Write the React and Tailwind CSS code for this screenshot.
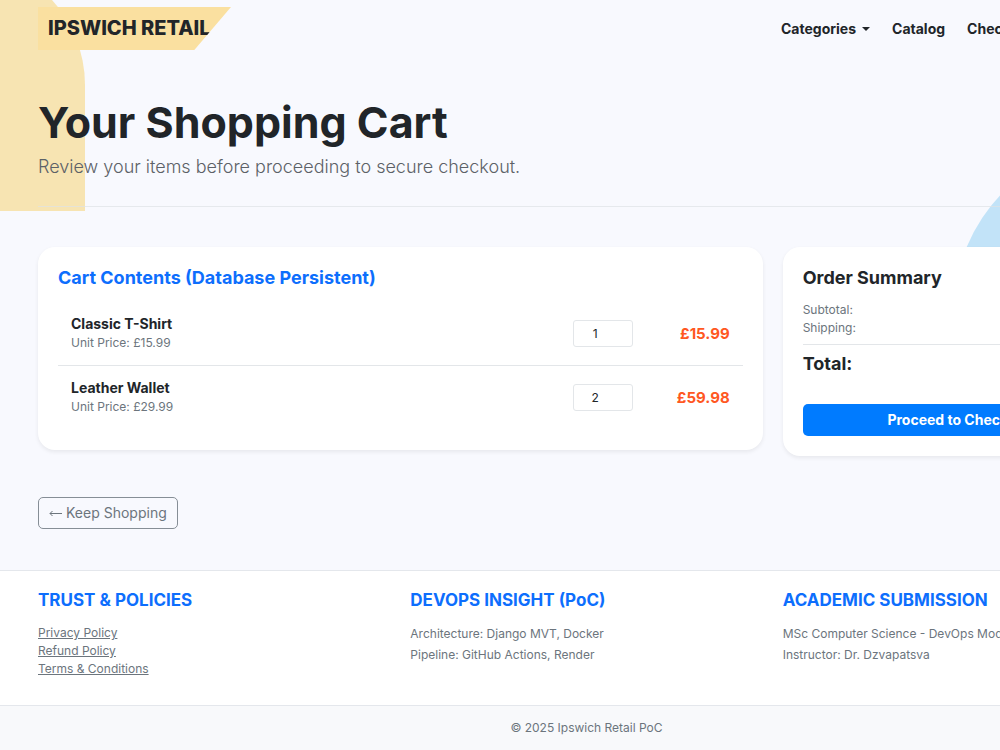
import { useState } from 'react';

const initialItems = [
  { id: 1, name: 'Classic T-Shirt', price: 15.99, qty: 1 },
  { id: 2, name: 'Leather Wallet', price: 29.99, qty: 2 },
];

const policies = ['Privacy Policy', 'Refund Policy', 'Terms & Conditions'];

const money = (value) => `£${value.toFixed(2)}`;

const Header = () => (
  <header className="relative flex items-center justify-between px-[38px] py-[7px]">
    <a
      href="#"
      className="w-[193px] h-[43px] pl-[10px] bg-[#fae0a0] text-[20px] leading-[43px] font-extrabold whitespace-nowrap [clip-path:polygon(0_0,100%_0,81%_100%,0_100%)]"
    >
      IPSWICH RETAIL
    </a>
    <nav className="flex w-[354px] gap-[22px] text-[14px] leading-[20px] font-bold whitespace-nowrap">
      <button className="flex items-center gap-[6px] font-bold">
        Categories
        <span className="border-x-4 border-t-4 border-x-transparent border-t-[#212529]" />
      </button>
      <a href="#">Catalog</a>
      <a href="#">Checkout</a>
      <a href="#">Cart</a>
    </nav>
  </header>
);

const CartContents = ({ items, onChange }) => (
  <section className="col-span-2 rounded-[17px] bg-white px-5 py-[21px] shadow-[0_2px_4px_rgba(0,0,0,0.07)]">
    <h2 className="mb-[14px] text-[18px] leading-[20px] font-bold text-[#0d6efd]">
      Cart Contents (Database Persistent)
    </h2>
    <ul className="divide-y divide-[#e3e6e9]">
      {items.map((item) => (
        <li key={item.id} className="flex items-center p-[13px]">
          <div className="flex-1">
            <h3 className="text-[14px] leading-[18px] font-bold">{item.name}</h3>
            <p className="text-[12px] leading-[19px] text-[#6c757d]">Unit Price: {money(item.price)}</p>
          </div>
          <input
            type="number"
            min="1"
            aria-label={`Quantity of ${item.name}`}
            value={item.qty}
            onChange={(e) => onChange(item.id, Number(e.target.value))}
            className="w-[60px] h-[27px] rounded-[3px] border border-[#e3e6e9] bg-white px-[7px] text-center text-[12px] leading-[18px]"
          />
          <p className="w-[97px] text-right text-[15px] leading-[20px] font-bold text-[#ff5722]">
            {money(item.price * item.qty)}
          </p>
        </li>
      ))}
    </ul>
  </section>
);

const OrderSummary = ({ total }) => (
  <section className="rounded-[17px] bg-white px-5 pt-[21px] pb-5 shadow-[0_2px_4px_rgba(0,0,0,0.07)]">
    <h2 className="mb-[13px] text-[18px] leading-[20px] font-bold">Order Summary</h2>
    <div className="text-[12px] leading-[18px] text-[#6c757d]">
      <p className="flex justify-between">
        <span>Subtotal:</span>
        <span>{money(total)}</span>
      </p>
      <p className="flex justify-between">
        <span>Shipping:</span>
        <span>{money(0)}</span>
      </p>
    </div>
    <p className="mt-[7px] flex justify-between border-t border-[#e3e6e9] pt-[9px] text-[18px] leading-[20px] font-bold">
      <span>Total:</span>
      <span>{money(total)}</span>
    </p>
    <button className="mt-[30px] h-8 w-full rounded-[5px] bg-[#007bff] text-[14px] leading-[20px] font-bold text-white">
      Proceed to Checkout
    </button>
  </section>
);

const Footer = () => (
  <footer className="relative border-t border-[#e4e7ec] bg-white">
    <div className="grid grid-cols-3 gap-5 px-[38px] pt-[19px] pb-[27px] text-[12px] text-[#6c757d]">
      <div>
        <h2 className="mb-[14px] text-[17px] leading-[20px] font-bold text-[#0d6efd]">TRUST &amp; POLICIES</h2>
        <ul className="leading-[18px]">
          {policies.map((policy) => (
            <li key={policy}>
              <a href="#" className="underline">{policy}</a>
            </li>
          ))}
        </ul>
      </div>
      <div>
        <h2 className="mb-[13px] text-[17px] leading-[20px] font-bold text-[#0d6efd]">DEVOPS INSIGHT (PoC)</h2>
        <p className="leading-[21px]">Architecture: Django MVT, Docker</p>
        <p className="leading-[21px]">Pipeline: GitHub Actions, Render</p>
      </div>
      <div>
        <h2 className="mb-[13px] text-[17px] leading-[20px] font-bold text-[#0d6efd]">ACADEMIC SUBMISSION</h2>
        <p className="leading-[21px]">MSc Computer Science - DevOps Module</p>
        <p className="leading-[21px]">Instructor: Dr. Dzvapatsva</p>
      </div>
    </div>
    <p className="border-t border-[#e4e7ec] bg-[#f8f9fb] pt-[11px] pb-[13px] text-center text-[12px] leading-[21px] text-[#6c757d]">
      © 2025 Ipswich Retail PoC
    </p>
  </footer>
);

const App = () => {
  const [items, setItems] = useState(initialItems);
  const total = items.reduce((sum, item) => sum + item.price * item.qty, 0);

  const handleChange = (id, qty) => {
    setItems(items.map((item) => (item.id === id ? { ...item, qty } : item)));
  };

  return (
    <div className="min-h-screen overflow-hidden bg-[#f8f9fe] font-[Inter,sans-serif] text-[#212529]">
      <div className="relative min-w-[1173px]">
        {/* Background shapes */}
        <div className="absolute -top-[41px] -left-[167px] size-[252px] rounded-t-full bg-[#f7e4b2]" />
        <div className="absolute top-[143px] left-[954px] size-[336px] rounded-full bg-[#c2e3f8]" />

        <Header />

        <main className="relative px-[38px] pt-[40px] pb-[41px]">
          <h1 className="text-[43px] leading-[50px] font-bold">Your Shopping Cart</h1>
          <p className="mt-[6px] text-[18px] leading-[27px] font-light text-[#5c6167]">
            Review your items before proceeding to secure checkout.
          </p>
          <hr className="mt-[26px] mb-[40px] border-[#dee2e6]/70" />

          <div className="grid grid-cols-3 items-start gap-5">
            <CartContents items={items} onChange={handleChange} />
            <OrderSummary total={total} />
          </div>

          <a
            href="#"
            className="mt-[41px] inline-flex h-8 items-center gap-1 rounded-[5px] border border-[#868e96] px-[10px] text-[14px] leading-[20px] text-[#6c757d]"
          >
            <svg viewBox="0 0 13 8" className="w-[13px] h-2" fill="none" stroke="currentColor" aria-hidden="true">
              <path d="M13 4.5H1M3.5 2L1 4.5L3.5 7" />
            </svg>
            Keep Shopping
          </a>
        </main>

        <Footer />
      </div>
    </div>
  );
};

export default App;
